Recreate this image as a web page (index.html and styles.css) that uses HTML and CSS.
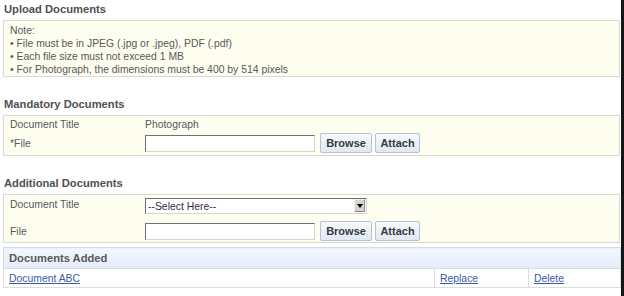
FILE: index.html
```html
<!DOCTYPE html>
<html>
<head>
<meta charset="utf-8">
<link rel="stylesheet" href="styles.css">
</head>
<body>
<div class="page">
  <h2 class="sec-title first">Upload Documents</h2>
  <div class="panel note">
    <div>Note:</div>
    <div>• File must be in JPEG (.jpg or .jpeg), PDF (.pdf)</div>
    <div>• Each file size must not exceed 1 MB</div>
    <div>• For Photograph, the dimensions must be 400 by 514 pixels</div>
  </div>

  <h2 class="sec-title">Mandatory Documents</h2>
  <div class="panel form mandatory">
    <div class="row text-row">
      <span class="lbl">Document Title</span>
      <span class="val">Photograph</span>
    </div>
    <div class="row ctrl-row">
      <span class="lbl">*File</span>
      <div class="ctrls">
        <input class="file-input" type="text">
        <button class="btn browse">Browse</button>
        <button class="btn attach">Attach</button>
      </div>
    </div>
  </div>

  <h2 class="sec-title">Additional Documents</h2>
  <div class="panel form additional">
    <div class="row select-row">
      <span class="lbl">Document Title</span>
      <div class="select-wrap">
        <select class="doc-select"><option>--Select Here--</option></select>
        <span class="select-arrow"><svg width="6" height="4" viewBox="0 0 6 4"><path d="M0 0H6L3 4Z" fill="#000"/></svg></span>
      </div>
    </div>
    <div class="row ctrl-row">
      <span class="lbl">File</span>
      <div class="ctrls">
        <input class="file-input" type="text">
        <button class="btn browse">Browse</button>
        <button class="btn attach">Attach</button>
      </div>
    </div>
  </div>

  <table class="docs">
    <colgroup>
      <col class="col-name">
      <col class="col-rep">
      <col class="col-del">
    </colgroup>
    <thead>
      <tr><th colspan="3">Documents Added</th></tr>
    </thead>
    <tbody>
      <tr>
        <td><a href="#">Document ABC</a></td>
        <td><a href="#">Replace</a></td>
        <td><a href="#">Delete</a></td>
      </tr>
    </tbody>
  </table>
</div>
</body>
</html>
```
FILE: styles.css
```css
html, body {
  margin: 0;
  padding: 0;
  background: #fff;
}
body {
  width: 624px;
  height: 296px;
  box-sizing: border-box;
  border-right: 3px solid #161616;
  padding: 0 1px 0 3px;
  font-family: "Liberation Sans", Arial, sans-serif;
  font-size: 10.4px;
  color: #595959;
  overflow: hidden;
}
.page {
  width: 617px;
}
.sec-title {
  margin: 20px 0 4px 1px;
  font-size: 11.2px;
  line-height: 14px;
  font-weight: bold;
  color: #505050;
}
.sec-title.first {
  margin-top: 2px;
}
.panel {
  border: 1px solid #d9d9d2;
  background: #fdfdf0;
}
.note {
  padding: 3px 6px 0 6px;
  line-height: 13px;
  height: 52px;
}
.form {
  padding: 0 6px;
  display: flex;
  flex-direction: column;
}
.row {
  display: flex;
  align-items: center;
}
.lbl {
  width: 135px;
  flex: none;
  line-height: 13px;
}
.val {
  line-height: 13px;
}
.mandatory {
  padding-top: 2px;
  padding-bottom: 2px;
  gap: 2px;
}
.additional {
  padding-top: 3px;
  padding-bottom: 1px;
  gap: 7px;
}
.select-row {
  align-items: flex-start;
}
.ctrls {
  display: flex;
  align-items: center;
}
.ctrl-row {
  height: 20px;
}
.file-input {
  width: 170px;
  height: 17px;
  box-sizing: border-box;
  margin: 0;
  padding: 0 2px;
  border: 1px solid;
  border-color: #6e6e6e #d4d4d4 #d4d4d4 #6e6e6e;
  background: #fff;
  font: 10px "Liberation Sans", Arial, sans-serif;
}
.btn {
  height: 20px;
  box-sizing: border-box;
  margin: 0;
  padding: 0;
  border: 1px solid #b3c2d4;
  border-radius: 2px;
  background: linear-gradient(#f7fafd, #dfe8f3);
  font: bold 11px "Liberation Sans", Arial, sans-serif;
  color: #3a3a3a;
}
.browse {
  width: 52px;
  margin-left: 5px;
}
.attach {
  width: 45px;
  margin-left: 3px;
}
.select-wrap {
  position: relative;
  width: 222px;
  height: 16px;
}
.doc-select {
  appearance: none;
  -webkit-appearance: none;
  width: 100%;
  height: 16px;
  box-sizing: border-box;
  margin: 0;
  padding: 0 0 0 2px;
  border: 1px solid;
  border-color: #6e6e6e #d4d4d4 #d4d4d4 #6e6e6e;
  background: #fff;
  font: 10.4px "Liberation Sans", Arial, sans-serif;
  color: #3a2a45;
  border-radius: 0;
}
.select-arrow {
  position: absolute;
  right: 2px;
  top: 1px;
  width: 11px;
  height: 13px;
  background: #d6d3cc;
  border: 1px solid;
  border-color: #f2f2f2 #8a8a8a #8a8a8a #f2f2f2;
  box-sizing: border-box;
  display: flex;
  align-items: center;
  justify-content: center;
  pointer-events: none;
}
.docs {
  margin-top: 4px;
  width: 617px;
  border-collapse: collapse;
  table-layout: fixed;
  font-size: 10.4px;
}
.col-name { width: 431px; }
.col-rep { width: 94px; }
.col-del { width: 92px; }
.docs th {
  height: 20px;
  padding: 0 0 0 5px;
  text-align: left;
  font-size: 11.2px;
  font-weight: bold;
  color: #595959;
  background: linear-gradient(#f3f7fd, #e4edf9);
  border: 1px solid #d3dbe5;
}
.docs td {
  height: 18px;
  padding: 0 0 0 5px;
  border: 1px solid #d9dee4;
  border-top: none;
}
.docs a {
  color: #3859a6;
  text-decoration: underline;
}
```
